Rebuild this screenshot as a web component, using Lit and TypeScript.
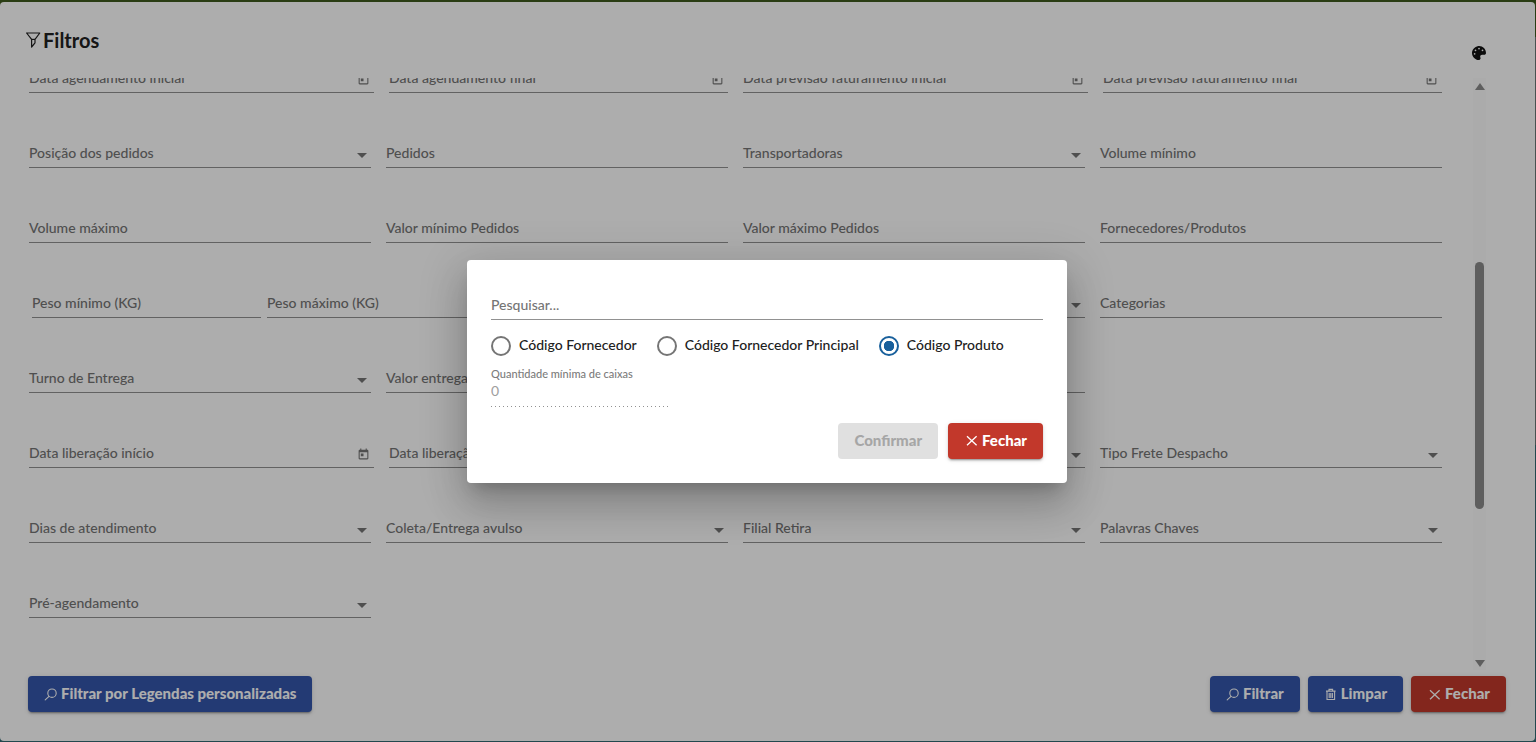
import { LitElement, html, css, TemplateResult } from "lit";
import { customElement, property } from "lit/decorators.js";

type Kind = "text" | "select" | "date";
interface Field { label: string; kind: Kind; }

const t = (label: string): Field => ({ label, kind: "text" });
const s = (label: string): Field => ({ label, kind: "select" });
const d = (label: string): Field => ({ label, kind: "date" });

const icons: Record<string, TemplateResult> = {
  funnel: html`<svg width="16" height="16" viewBox="0 0 16 16" fill="none" stroke="currentColor" stroke-width="1.2" stroke-linejoin="round" aria-hidden="true"><path d="M1.600 1h13.200L10 7.400v3.400L6.600 15V7.400z"/><path d="M6.600 7.400H10"/></svg>`,
  search: html`<svg width="13" height="13" viewBox="0 0 13 13" fill="none" stroke="currentColor" stroke-width="1.1" stroke-linecap="round" aria-hidden="true"><circle cx="8" cy="5.200" r="4.200"/><path d="M5 8.300L1.200 11.800"/></svg>`,
  trash: html`<svg width="13" height="13" viewBox="0 0 13 13" fill="none" stroke="currentColor" stroke-width="1.1" aria-hidden="true"><path d="M2 3.100h9.600M5 2.900V1.400h3.600v1.500M3 3.100v8.400h7.600V3.100M5.200 5v5M6.800 5v5M8.400 5v5"/></svg>`,
  close: html`<svg width="14" height="13" viewBox="0 0 14 13" fill="none" stroke="currentColor" stroke-width="1.3" aria-hidden="true"><path d="M3 2.200l9.600 9M12.600 2.200L3 11.200"/></svg>`,
  palette: html`<svg width="14" height="14" viewBox="0 0 512 512" fill="currentColor" aria-hidden="true"><path d="M204.300 5C104.900 24.400 24.800 104.300 5.200 203.400c-37 187 131.700 326.400 258.800 306.700 41.200-6.400 61.400-54.600 42.500-91.700-23.100-45.400 9.900-98.400 60.900-98.400h79.700c35.800 0 64.800-29.600 64.900-65.300C511.500 97.100 368.100-26.900 204.300 5zM96 320c-17.700 0-32-14.300-32-32s14.300-32 32-32 32 14.300 32 32-14.300 32-32 32zm32-128c-17.700 0-32-14.300-32-32s14.300-32 32-32 32 14.300 32 32-14.300 32-32 32zm128-64c-17.700 0-32-14.300-32-32s14.300-32 32-32 32 14.300 32 32-14.300 32-32 32zm128 64c-17.700 0-32-14.300-32-32s14.300-32 32-32 32 14.300 32 32-14.300 32-32 32z"/></svg>`,
  calendar: html`<svg width="13" height="13" viewBox="0 0 24 24" fill="currentColor" aria-hidden="true"><path d="M19 3h-1V1h-2v2H8V1H6v2H5c-1.100 0-2 .9-2 2v14c0 1.100.9 2 2 2h14c1.100 0 2-.9 2-2V5c0-1.100-.9-2-2-2zm0 16H5V8h14v11zM7 10h5v5H7z"/></svg>`,
};

@customElement("filter-field")
export class FilterField extends LitElement {
  @property() label = "";
  @property() kind: Kind = "text";

  static styles = css`
    :host { display: block; min-width: 0; }
    .field {
      display: grid;
      grid-template-columns: minmax(0, 1fr) auto;
      align-items: center;
      height: 29px;
      box-sizing: border-box;
      border-bottom: 1px solid #919191;
      color: #757575;
    }
    label { grid-area: 1 / 1; font-size: 14px; line-height: 20px; font-weight: 500; pointer-events: none; white-space: nowrap; }
    .control {
      grid-area: 1 / 1 / 2 / 3;
      width: 100%;
      height: 24px;
      padding: 0;
      border: 0;
      outline: 0;
      background: transparent;
      appearance: none;
      font: inherit;
      color: #212121;
    }
    .arrow { grid-area: 1 / 2; width: 0; height: 0; margin: 4px 4px 0 0; border: 5px solid transparent; border-top-color: currentColor; border-bottom: 0; pointer-events: none; }
    .pick { grid-area: 1 / 2; display: flex; padding: 0; margin: 3px 4px 0 0; border: 0; background: none; color: inherit; }
  `;

  render() {
    return html`<div class="field">
      ${this.kind === "select"
        ? html`<select id="c" class="control"><option></option></select>`
        : html`<input id="c" class="control" type="text" />`}
      <label for="c">${this.label}</label>
      ${this.kind === "select" ? html`<span class="arrow"></span>` : ""}
      ${this.kind === "date" ? html`<button class="pick" type="button" aria-label="Abrir calendário">${icons.calendar}</button>` : ""}
    </div>`;
  }
}

@customElement("app-root")
export class AppRoot extends LitElement {
  static styles = css`
    :host {
      display: block;
      height: 100vh;
      overflow: hidden;
      font-family: Lato, "Open Sans", sans-serif;
      font-size: 14px;
      color: #212121;
    }
    .page { display: grid; height: 100%; background: linear-gradient(#3f5a1e 0 5%, #6c7876 5% 60%, #346a73 60%); }
    .sheet {
      grid-area: 1 / 1;
      display: flex;
      flex-direction: column;
      min-height: 0;
      margin: 2px 1px 1px 0;
      padding: 24px 29px 29px 28px;
      box-sizing: border-box;
      border-radius: 4px;
      background: #fff;
    }
    .head { display: flex; justify-content: space-between; height: 52px; padding-right: 20px; }
    h1 { display: flex; align-items: center; gap: 2px; height: 28px; margin: 0 0 0 -3px; font-size: 20px; line-height: 28px; font-weight: 700; }
    .theme { display: flex; align-self: flex-end; margin-bottom: 18px; padding: 0; border: 0; background: none; color: #111; }
    .body { display: flex; flex: 1; min-height: 0; margin-right: 20px; gap: 31px; }
    .view { flex: 1; min-width: 0; overflow: hidden; padding-left: 1px; }
    .rows { display: flex; flex-direction: column; gap: 46px; margin-top: -14px; }
    .row, .pair { display: grid; grid-template-columns: repeat(4, minmax(0, 1fr)); gap: 15px; }
    .pair { grid-template-columns: 345fr 339fr; }
    .row.pairs { grid-template-columns: repeat(2, minmax(0, 1fr)); }
    .span { grid-column: span 2; }
    .pair.three { grid-template-columns: repeat(3, minmax(0, 1fr)); gap: 6px; padding: 0 3px; margin-right: -6px; }
    .bar { display: flex; flex-direction: column; align-items: center; justify-content: space-between; width: 13px; padding: 5px 0 3px; box-sizing: border-box; background: #fcfcfc; color: #8b8b8b; }
    .up, .down { border: 5px solid transparent; }
    .up { border-top: 0; border-bottom: 7px solid currentColor; }
    .down { border-bottom: 0; border-top: 7px solid currentColor; }
    .track { flex: 1; display: grid; grid-template-rows: 172fr 247fr 151fr; width: 9px; }
    .thumb { grid-row: 2; border-radius: 5px; background: #8b8b8b; }
    .foot { display: flex; gap: 8px; margin-top: 6px; }
    .push { margin-right: auto; }
    .btn {
      display: flex;
      align-items: center;
      gap: 4px;
      height: 36px;
      padding: 0 16px 2px;
      border: 0;
      border-radius: 4px;
      box-sizing: border-box;
      font: 900 15px/34px Lato, sans-serif;
      color: #fff;
      background: #3456ac;
      box-shadow: 0 3px 1px -2px rgba(0,0,0,.2), 0 2px 2px rgba(0,0,0,.14), 0 1px 5px rgba(0,0,0,.12);
    }
    .btn svg { margin-top: 2px; }
    .red { background: #c2382b; }
    .off { background: #e0e0e0; color: #a6a6a6; box-shadow: none; }
    .veil { grid-area: 1 / 1; z-index: 1; display: grid; place-items: center; padding-right: 2px; background: rgba(0,0,0,.32); }
    .modal {
      width: 600px;
      max-width: 80vw;
      padding: 24px;
      box-sizing: border-box;
      border-radius: 4px;
      background: #fff;
      box-shadow: 0 11px 15px -7px rgba(0,0,0,.2), 0 24px 38px 3px rgba(0,0,0,.14), 0 9px 46px 8px rgba(0,0,0,.12);
    }
    .modal filter-field { padding-top: 7px; }
    .radios { display: flex; gap: 20px; margin-top: 15px; }
    .radios label { display: flex; align-items: flex-start; gap: 8px; height: 22px; line-height: 20px; font-weight: 500; white-space: nowrap; }
    .radios input { appearance: none; width: 20px; height: 20px; margin: 1px 0 0; border: 2px solid #757575; border-radius: 50%; box-sizing: border-box; }
    .radios input:checked { border-color: #19609c; background: radial-gradient(circle, #19609c 5px, transparent 5.5px); }
    .qty { display: flex; flex-direction: column; width: 179px; margin-top: 11px; background: repeating-linear-gradient(90deg, #919191 0 1px, transparent 1px 4px) bottom / 100% 1px no-repeat; }
    .qty label { font-size: 11px; line-height: 12px; font-weight: 500; color: #7c7c7c; }
    .qty input { width: 100%; height: 22px; margin-bottom: 5px; padding: 0; border: 0; background: none; font: 14px/22px Lato, sans-serif; color: #9e9e9e; }
    .acts { display: flex; justify-content: flex-end; gap: 10px; margin-top: 16px; }
  `;

  private f(x: Field) {
    return html`<filter-field .label=${x.label} .kind=${x.kind}></filter-field>`;
  }

  private row(fields: Field[]) {
    return html`<div class="row">${fields.map((x) => this.f(x))}</div>`;
  }

  private dates(a: Field[], b: Field[]) {
    return html`<div class="row pairs">${[a, b].map((p) => html`<div class="pair">${p.map((x) => this.f(x))}</div>`)}</div>`;
  }

  render() {
    return html`<div class="page">
      <main class="sheet">
        <header class="head">
          <h1>${icons.funnel}Filtros</h1>
          <button class="theme" type="button" aria-label="Cores">${icons.palette}</button>
        </header>
        <div class="body">
          <div class="view"><div class="rows">
            ${this.dates([d("Data agendamento inicial"), d("Data agendamento final")], [d("Data previsão faturamento inicial"), d("Data previsão faturamento final")])}
            ${this.row([s("Posição dos pedidos"), t("Pedidos"), s("Transportadoras"), t("Volume mínimo")])}
            ${this.row([t("Volume máximo"), t("Valor mínimo Pedidos"), t("Valor máximo Pedidos"), t("Fornecedores/Produtos")])}
            <div class="row">
              <div class="pair three span">${[t("Peso mínimo (KG)"), t("Peso máximo (KG)"), t("")].map((x) => this.f(x))}</div>
              ${this.f(s(""))}${this.f(t("Categorias"))}
            </div>
            ${this.row([s("Turno de Entrega"), t("Valor entrega"), t("")])}
            <div class="row">
              <div class="pair span">${[d("Data liberação início"), d("Data liberação fim")].map((x) => this.f(x))}</div>
              ${this.f(s(""))}${this.f(s("Tipo Frete Despacho"))}
            </div>
            ${this.row([s("Dias de atendimento"), s("Coleta/Entrega avulso"), s("Filial Retira"), s("Palavras Chaves")])}
            ${this.row([s("Pré-agendamento")])}
          </div></div>
          <div class="bar"><span class="up"></span><div class="track"><span class="thumb"></span></div><span class="down"></span></div>
        </div>
        <footer class="foot">
          <button class="btn push" type="button">${icons.search}Filtrar por Legendas personalizadas</button>
          <button class="btn" type="button">${icons.search}Filtrar</button>
          <button class="btn" type="button">${icons.trash}Limpar</button>
          <button class="btn red" type="button">${icons.close}Fechar</button>
        </footer>
      </main>
      <div class="veil">
        <section class="modal" role="dialog" aria-modal="true" aria-label="Pesquisar">
          <filter-field label="Pesquisar..."></filter-field>
          <div class="radios">
            <label><input type="radio" name="code" />Código Fornecedor</label>
            <label><input type="radio" name="code" />Código Fornecedor Principal</label>
            <label><input type="radio" name="code" checked />Código Produto</label>
          </div>
          <div class="qty"><label for="qty">Quantidade mínima de caixas</label><input id="qty" value="0" disabled /></div>
          <div class="acts">
            <button class="btn off" type="button" disabled>Confirmar</button>
            <button class="btn red" type="button">${icons.close}Fechar</button>
          </div>
        </section>
      </div>
    </div>`;
  }
}
